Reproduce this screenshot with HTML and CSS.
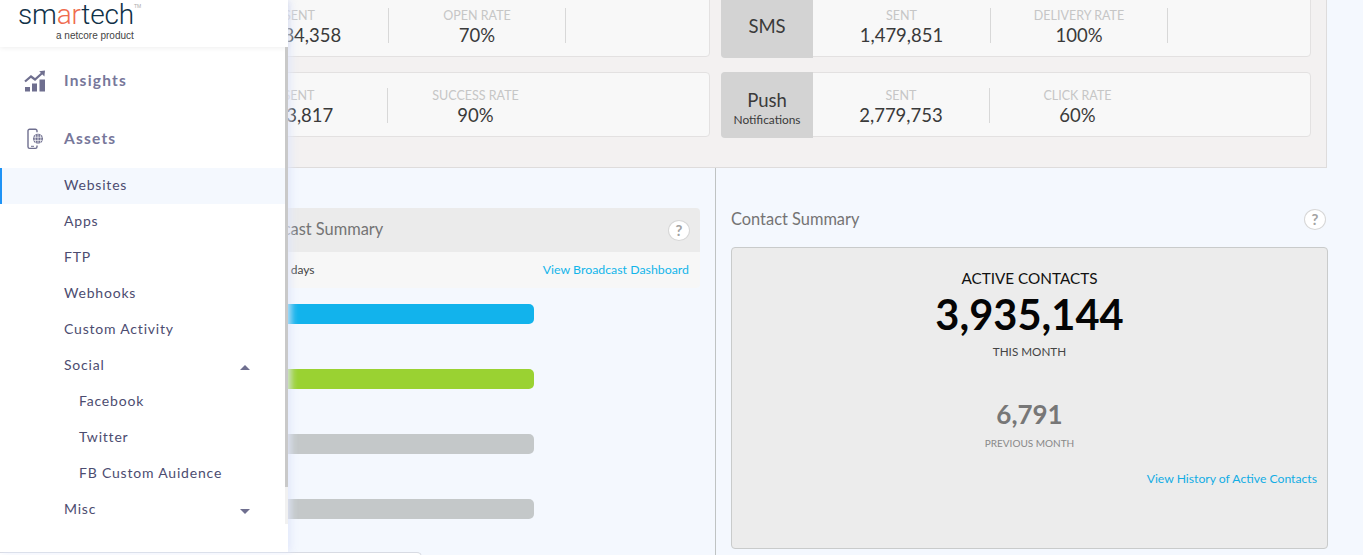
FILE: index.html
```html
<!DOCTYPE html>
<html lang="en">
<head>
<meta charset="utf-8">
<title>Smartech Dashboard</title>
<link rel="stylesheet" href="styles.css">
</head>
<body>
<main class="page">
  <section class="channels">
    <div class="channel-row channel-row-first">
      <div class="card">
        <div class="card-label">Email</div>
        <div class="metric metric-sent"><span class="metric-name">SENT</span><span class="metric-value">8,384,358</span></div>
        <div class="metric metric-rate"><span class="metric-name">OPEN RATE</span><span class="metric-value">70%</span></div>
      </div>
      <div class="card">
        <div class="card-label">SMS</div>
        <div class="metric metric-sent"><span class="metric-name">SENT</span><span class="metric-value">1,479,851</span></div>
        <div class="metric metric-rate"><span class="metric-name">DELIVERY RATE</span><span class="metric-value">100%</span></div>
      </div>
    </div>
    <div class="channel-row">
      <div class="card">
        <div class="card-label">Web</div>
        <div class="metric metric-sent"><span class="metric-name">SENT</span><span class="metric-value">803,817</span></div>
        <div class="metric metric-rate metric-last"><span class="metric-name">SUCCESS RATE</span><span class="metric-value">90%</span></div>
      </div>
      <div class="card">
        <div class="card-label">Push<small>Notifications</small></div>
        <div class="metric metric-sent"><span class="metric-name">SENT</span><span class="metric-value">2,779,753</span></div>
        <div class="metric metric-rate metric-last"><span class="metric-name">CLICK RATE</span><span class="metric-value">60%</span></div>
      </div>
    </div>
  </section>

  <section class="summaries">
    <div class="broadcast">
      <header class="broadcast-head">
        <h2>Broadcast Summary</h2>
        <span class="help">?</span>
      </header>
      <div class="broadcast-sub">
        <span>Last 30 days</span>
        <a href="#">View Broadcast Dashboard</a>
      </div>
      <div class="bars">
        <div class="bar bar-blue"></div>
        <div class="bar bar-green"></div>
        <div class="bar bar-gray"></div>
        <div class="bar bar-gray"></div>
      </div>
      <div class="stub"></div>
    </div>
    <div class="contacts">
      <header class="contacts-head">
        <h2>Contact Summary</h2>
        <span class="help">?</span>
      </header>
      <div class="contacts-box">
        <div class="contacts-title">ACTIVE CONTACTS</div>
        <div class="contacts-number">3,935,144</div>
        <div class="contacts-caption">THIS MONTH</div>
        <div class="contacts-prev">6,791</div>
        <div class="contacts-prev-caption">PREVIOUS MONTH</div>
        <a class="contacts-link" href="#">View History of Active Contacts</a>
      </div>
    </div>
  </section>
</main>

<aside class="sidebar">
  <div class="brand">
    <div class="logo"><span class="logo-name">sm<span class="logo-accent">ar</span>tech</span><sup class="logo-tm">TM</sup></div>
    <div class="logo-sub">a netcore product</div>
  </div>
  <nav class="nav">
    <a class="nav-top" href="#">
      <svg class="nav-icon" viewBox="0 0 22 22" width="22" height="22" aria-hidden="true">
        <path d="M1 11.5 L7 6.5 L11 9.5 L18 3.2" fill="none" stroke="#6f6f8f" stroke-width="2.2"/>
        <path d="M15.2 1.2 L21 0.6 L20.4 6.6 Z" fill="#6f6f8f"/>
        <rect x="1" y="17" width="5" height="4.5" fill="#6f6f8f"/>
        <rect x="8" y="13.5" width="5" height="8" fill="#6f6f8f"/>
        <rect x="15.5" y="9.5" width="5.5" height="12" fill="#6f6f8f"/>
      </svg>
      <span>Insights</span>
    </a>
    <a class="nav-top" href="#">
      <svg class="nav-icon" viewBox="0 0 22 22" width="22" height="22" aria-hidden="true">
        <path d="M13 4.2 V2.8 A1.6 1.6 0 0 0 11.4 1.2 H5.6 A1.6 1.6 0 0 0 4 2.8 V18.8 A1.6 1.6 0 0 0 5.6 20.4 H11.4 A1.6 1.6 0 0 0 13 18.8 V17.6" fill="none" stroke="#6f6f8f" stroke-width="1.4"/>
        <rect x="7" y="17.8" width="3" height="1" fill="#6f6f8f"/>
        <circle cx="14" cy="10.8" r="5" fill="#6f6f8f"/>
        <path d="M9.5 9.2 H18.5 M9.5 12.4 H18.5 M14 6 V15.6 M11.8 6.6 Q10.4 10.8 11.8 15 M16.2 6.6 Q17.6 10.8 16.2 15" fill="none" stroke="#fff" stroke-width=".7"/>
      </svg>
      <span>Assets</span>
    </a>
    <a class="nav-item nav-active" href="#">Websites</a>
    <a class="nav-item" href="#">Apps</a>
    <a class="nav-item" href="#">FTP</a>
    <a class="nav-item" href="#">Webhooks</a>
    <a class="nav-item" href="#">Custom Activity</a>
    <a class="nav-item" href="#">Social<i class="caret caret-up"></i></a>
    <a class="nav-item nav-child" href="#">Facebook</a>
    <a class="nav-item nav-child" href="#">Twitter</a>
    <a class="nav-item nav-child" href="#">FB Custom Auidence</a>
    <a class="nav-item" href="#">Misc<i class="caret caret-down"></i></a>
  </nav>
  <div class="scroll-track"><div class="scroll-thumb"></div></div>
</aside>
</body>
</html>
```
FILE: styles.css
```css
* { box-sizing: border-box; }
html, body { margin: 0; height: 100%; }
body {
  width: 1363px;
  height: 555px;
  overflow: hidden;
  position: relative;
  background: #f4f8fe;
  font-family: "Lato", "Noto Sans", sans-serif;
  color: #222;
}
a { text-decoration: none; }
h2 { margin: 0; font-weight: 400; }

.page { width: 1327px; margin-top: -8px; }

.channels {
  height: 176px;
  padding-left: 119px;
  background: #f3f1f1;
  border-right: 1px solid #dedcdc;
  border-bottom: 1px solid #dedcdc;
  display: flex;
  flex-direction: column;
  gap: 15px;
}
.channel-row { display: flex; gap: 11px; }
.card {
  width: 591px;
  height: 65px;
  display: flex;
  background: #f8f8f8;
  border: 1px solid #e3e1e1;
  border-radius: 4px;
}
.card + .card { width: 590px; }
.card-label {
  width: 92px;
  margin: -1px 0 -1px -1px;
  height: 66px;
  padding-top: 2px;
  background: #d3d3d3;
  border-radius: 4px 0 0 4px;
  display: flex;
  flex-direction: column;
  align-items: center;
  justify-content: center;
  font-size: 18.5px;
  line-height: 22px;
  color: #3a3a3a;
}
.card-label small { font-size: 11.9px; line-height: 16px; margin: 1px 0 -5px; }
.metric {
  margin-top: 15px;
  height: 35px;
  display: flex;
  flex-direction: column;
  align-items: center;
  border-right: 1px solid #d8d8d8;
}
.metric-sent { width: 177px; }
.channel-row-first .metric-sent { width: 178px; }
.metric-rate { width: 177px; }
.metric-last { border-right: 0; width: 175px; }
.metric-name { font-size: 12.5px; line-height: 16px; color: #c6c6c6; }
.metric-value { font-size: 18.5px; line-height: 22px; color: #3a3a3a; }

.summaries { display: flex; height: 387px; width: 1328px; }
.broadcast {
  width: 716px;
  padding: 40px 15px 0 119px;
  border-right: 1px solid #bfc3c3;
}
.broadcast-head {
  height: 44px;
  padding: 0 10px 0 121px;
  background: #ebebeb;
  border-radius: 4px 4px 0 0;
  display: flex;
  align-items: center;
  justify-content: space-between;
}
.broadcast-head h2 { font-size: 16.4px; color: #747474; padding-bottom: 3px; }
.help {
  width: 22px;
  height: 21px;
  border: 1px solid #d7d7d7;
  border-radius: 50%;
  background: #fff;
  color: #a3a3a3;
  font-size: 15px;
  font-weight: 700;
  line-height: 18px;
  text-align: center;
}
.broadcast-sub {
  height: 36px;
  padding: 0 11px 2px 130px;
  background: #f7f7f7;
  border-radius: 0 0 4px 4px;
  display: flex;
  align-items: center;
  justify-content: space-between;
  font-size: 12px;
  color: #444;
}
.broadcast-sub a { color: #12b5ea; font-size: 12.35px; }
.bars {
  margin-top: 16px;
  display: flex;
  flex-direction: column;
  gap: 45px;
  width: 415px;
}
.bar { height: 20px; border-radius: 5px; }
.bar-blue { background: #12b3ec; }
.bar-green { background: #9ad232; }
.bar-gray { background: #c4c8c9; }
.stub {
  margin: 33px 0 0 -119px;
  width: 422px;
  height: 10px;
  background: #fff;
  border-top: 1px solid #d8dbe3;
  border-right: 1px solid #d8dbe3;
  border-radius: 0 5px 0 0;
}

.contacts { width: 612px; padding: 40px 0 0 15px; }
.contacts-head {
  height: 22px;
  padding-right: 2px;
  display: flex;
  align-items: center;
  justify-content: space-between;
}
.contacts-head h2 { font-size: 16.4px; color: #747474; padding-bottom: 2px; }
.contacts-box {
  margin-top: 17px;
  height: 302px;
  padding-top: 21px;
  background: #ececec;
  border: 1px solid #c9cbcb;
  border-radius: 4px;
  display: flex;
  flex-direction: column;
  align-items: center;
}
.contacts-title { font-size: 15.3px; line-height: 18px; color: #111; }
.contacts-number { font-size: 41.6px; line-height: 44px; margin-top: 5px; font-weight: 700; color: #050505; }
.contacts-caption { margin-top: 7px; font-size: 11.7px; line-height: 16px; color: #444; }
.contacts-prev { margin-top: 40px; font-size: 26px; line-height: 30px; font-weight: 700; color: #777; }
.contacts-prev-caption { margin-top: 7px; font-size: 10px; line-height: 14px; color: #888; }
.contacts-link { align-self: flex-end; margin: 21px 10px 0 0; font-size: 12.2px; line-height: 16px; color: #12ade4; }

.sidebar {
  position: absolute;
  left: 0;
  top: 0;
  width: 288px;
  height: 552px;
  background: #fff;
  box-shadow: 3px 0 7px rgba(225, 230, 250, .85);
}
.brand {
  height: 47px;
  padding-left: 18px;
  box-shadow: 0 1px 5px rgba(0, 0, 0, .07);
  position: relative;
}
.logo { display: flex; align-items: flex-start; height: 29px; }
.logo-name {
  font-family: "Roboto", "Liberation Sans", sans-serif;
  font-weight: 300;
  font-size: 28px;
  line-height: 32px;
  letter-spacing: -.2px;
  color: #0f3147;
  margin-top: -1px;
}
.logo-accent { color: #ef6c4f; }
.logo-tm { font-size: 5px; line-height: 8px; color: #aaa; margin: 2px 0 0 0; font-family: "Liberation Sans", sans-serif; }
.logo-sub {
  margin-left: 38px;
  font-family: "Liberation Sans", sans-serif;
  font-size: 10px;
  line-height: 13px;
  color: #444;
}
.nav { padding-top: 5px; }
.nav-top {
  height: 58px;
  padding: 0 0 2px 24px;
  display: flex;
  align-items: center;
  gap: 18px;
  font-size: 15.5px;
  font-weight: 700;
  letter-spacing: 1.2px;
  color: #77779a;
}
.nav-icon { flex: none; margin-top: 2px; }
.nav-item {
  height: 36px;
  padding: 0 35px 3px 64px;
  display: flex;
  align-items: center;
  justify-content: space-between;
  font-size: 14px;
  letter-spacing: .8px;
  color: #4c4c70;
  width: 285px;
}
.nav-active {
  background: #f4f8fe;
  border-left: 2px solid #1f93f5;
  padding-left: 62px;
}
.nav-child { padding-left: 79px; }
.caret { width: 0; height: 0; margin-top: 5px; border-left: 5px solid transparent; border-right: 5px solid transparent; }
.caret-up { border-bottom: 5px solid #6f6f8f; }
.caret-down { border-top: 5px solid #6f6f8f; }
.scroll-track {
  position: absolute;
  right: 0;
  top: 47px;
  width: 3px;
  height: 477px;
  background: #f1f1f1;
}
.scroll-thumb { height: 440px; background: #c9c9c9; }
```
